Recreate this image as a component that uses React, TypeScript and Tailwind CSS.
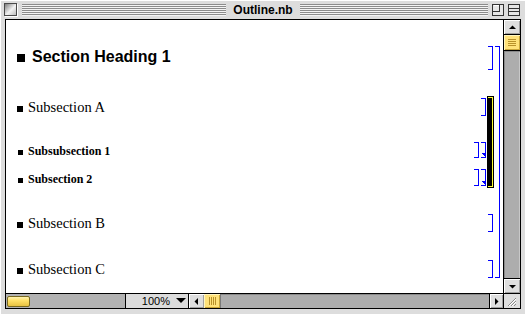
import React from 'react';

const sans = { fontFamily: '"Liberation Sans", Arial, sans-serif' };
const serif = { fontFamily: '"Liberation Serif", "Times New Roman", serif' };

// "]" shaped cell bracket, drawn with 1px rects so the edges stay crisp
function Bracket({ x, y, w, h, color = '#0000ff' }: { x: number; y: number; w: number; h: number; color?: string }) {
  return (
    <g fill={color}>
      <rect x={x} y={y} width={w} height={1} />
      <rect x={x + w - 1} y={y} width={1} height={h} />
      <rect x={x} y={y + h - 1} width={w} height={1} />
    </g>
  );
}

function ClosedGroup({ x, y, h }: { x: number; y: number; h: number }) {
  return (
    <g>
      <Bracket x={x} y={y} w={5} h={h} />
      <polygon points={`${x + 0.5},${y + h - 5} ${x + 5},${y + h - 5} ${x + 5},${y + h}`} fill="#0000ff" />
    </g>
  );
}

function Stripes({ w }: { w: number }) {
  return (
    <div
      style={{ width: w }}
      className="h-[12px] bg-[repeating-linear-gradient(to_bottom,#8c8c8c_0px,#8c8c8c_1px,#f4f4f4_1px,#f4f4f4_2px)]"
    />
  );
}

function TitleBar() {
  return (
    <div className="flex h-[19px] items-center pl-[4px]">
      <div className="h-[13px] w-[13px] border border-[#4a4a4a] bg-[linear-gradient(135deg,#7d7d7d,#f2f2f2_55%,#bdbdbd)] shadow-[1px_1px_0_#fff]" />
      <div className="ml-[5px]">
        <Stripes w={204} />
      </div>
      <div className="w-[74px] text-center text-[12px] font-bold leading-none text-black" style={sans}>
        Outline.nb
      </div>
      <Stripes w={188} />
      <svg width="12" height="12" className="ml-[4px]" shapeRendering="crispEdges">
        <rect x="0.5" y="0.5" width="11" height="11" fill="#e6e6e6" stroke="#333" />
        <path d="M7.5 1 V7.5 H1" fill="none" stroke="#333" />
        <path d="M1.5 1.5 H7" stroke="#fff" />
      </svg>
      <svg width="12" height="12" className="ml-[4px]" shapeRendering="crispEdges">
        <rect x="0.5" y="0.5" width="11" height="11" fill="#e6e6e6" stroke="#333" />
        <path d="M1 4.5 H11 M1 7.5 H11" stroke="#333" />
      </svg>
    </div>
  );
}

function Square({ size, gap }: { size: number; gap: number }) {
  return <span className="inline-block bg-black" style={{ width: size, height: size, marginRight: gap }} />;
}

function Cells() {
  return (
    <div className="flex flex-1 flex-col text-black">
      <div className="mt-[28px] pl-[11px] text-[16px] font-bold leading-[17px]" style={sans}>
        <Square size={8} gap={7} />
        Section Heading 1
      </div>
      <div className="mt-[35px] pl-[11px] text-[14.5px] leading-[15px]" style={serif}>
        <Square size={6} gap={5} />
        Subsection A
      </div>
      <div className="mt-[30px] pl-[12px] text-[12px] font-bold leading-[12px]" style={serif}>
        <Square size={5} gap={5} />
        Subsubsection 1
      </div>
      <div className="mt-[16px] pl-[12px] text-[12px] font-bold leading-[12px]" style={serif}>
        <Square size={5} gap={5} />
        Subsection 2
      </div>
      <div className="mt-[31px] pl-[11px] text-[14.5px] leading-[15px]" style={serif}>
        <Square size={6} gap={5} />
        Subsection B
      </div>
      <div className="mt-[31px] pl-[11px] text-[14.5px] leading-[15px]" style={serif}>
        <Square size={6} gap={5} />
        Subsection C
      </div>
    </div>
  );
}

function Brackets() {
  return (
    <svg width="33" height="273" className="shrink-0" shapeRendering="crispEdges">
      <Bracket x={18} y={26} w={5} h={24} />
      <Bracket x={25} y={26} w={5} h={232} />
      <Bracket x={11} y={78} w={5} h={18} />
      <rect x={17} y={76} width={7} height={92} fill="#000" />
      <Bracket x={18} y={77} w={5} h={90} color="#ffff33" />
      <Bracket x={4} y={122} w={5} h={16} />
      <ClosedGroup x={11} y={122} h={16} />
      <Bracket x={4} y={149} w={5} h={17} />
      <ClosedGroup x={11} y={149} h={17} />
      <Bracket x={18} y={194} w={5} h={18} />
      <Bracket x={18} y={240} w={5} h={18} />
    </svg>
  );
}

function ArrowButton({ dir }: { dir: 'up' | 'down' | 'left' | 'right' }) {
  const pts = {
    up: '3,8 10,8 6.5,4.5',
    down: '3,5 10,5 6.5,8.5',
    left: '8,3 8,10 4.5,6.5',
    right: '5,3 5,10 8.5,6.5',
  }[dir];
  return (
    <svg width="13" height="13" viewBox="0 0 13 13">
      <polygon points={pts} fill="#000" />
    </svg>
  );
}

function VScroll() {
  return (
    <div className="flex h-[273px] w-[16px] flex-col">
      <div className="flex h-[15px] items-center justify-center border-b border-black bg-[#dedede] shadow-[inset_1px_1px_0_#fff,inset_-1px_-1px_0_#a0a0a0]">
        <ArrowButton dir="up" />
      </div>
      <div className="flex h-[16px] flex-col items-center justify-center gap-[1px] border-b border-black bg-[#ffe27a] shadow-[inset_1px_1px_0_#fff6c0,inset_-1px_-1px_0_#c9a53a]">
        {[0, 1, 2, 3].map((i) => (
          <div key={i} className="h-[1px] w-[8px] bg-[#b8912a]" />
        ))}
      </div>
      <div className="flex-1 bg-[#adadad] shadow-[inset_1px_1px_0_#8a8a8a,inset_-1px_0_0_#c8c8c8]" />
      <div className="flex h-[15px] items-center justify-center border-t border-black bg-[#dedede] shadow-[inset_1px_1px_0_#fff,inset_-1px_-1px_0_#a0a0a0]">
        <ArrowButton dir="down" />
      </div>
    </div>
  );
}

function HScroll() {
  return (
    <div className="flex h-[15px] border-t border-black">
      <div className="flex w-[120px] items-center border-r border-black bg-[#b2b2b2] pl-[1px]">
        <div className="h-[11px] w-[23px] rounded-[2px] border border-[#7a6a20] bg-[linear-gradient(to_bottom,#fff3b0,#ffe066_40%,#e8c240)]" />
      </div>
      <div className="flex w-[62px] items-center justify-end bg-[#dcdcdc] pr-[1px] text-[11px] leading-none text-black" style={sans}>
        <span className="mr-[6px]">100%</span>
        <svg width="10" height="6" className="mr-[1px]">
          <polygon points="0,0 10,0 5,5" fill="#000" />
        </svg>
      </div>
      <div className="flex w-[16px] items-center justify-center border-l border-black bg-[#dedede] shadow-[inset_1px_1px_0_#fff,inset_-1px_-1px_0_#a0a0a0]">
        <ArrowButton dir="left" />
      </div>
      <div className="flex w-[16px] items-center justify-center gap-[1px] bg-[#ffe27a] shadow-[inset_1px_1px_0_#fff6c0,inset_-1px_-1px_0_#c9a53a]">
        {[0, 1, 2, 3].map((i) => (
          <div key={i} className="h-[8px] w-[1px] bg-[#b8912a]" />
        ))}
      </div>
      <div className="flex-1 border-l border-[#7a7a7a] bg-[#adadad] shadow-[inset_0_1px_0_#8a8a8a]" />
      <div className="flex w-[14px] items-center justify-center border-l border-black bg-[#dedede] shadow-[inset_1px_1px_0_#fff,inset_-1px_-1px_0_#a0a0a0]">
        <ArrowButton dir="right" />
      </div>
    </div>
  );
}

function GrowBox() {
  return (
    <div className="h-[15px] border-t border-black bg-[#dedede]">
      <svg width="16" height="14" shapeRendering="crispEdges">
        <path d="M4 12 L12 4 M7 12 L12 7 M10 12 L12 10" stroke="#8a8a8a" />
        <path d="M5 12 L12 5 M8 12 L12 8" stroke="#fff" />
      </svg>
    </div>
  );
}

export default function App() {
  return (
    <div className="h-[314px] w-[525px] overflow-hidden bg-[#dddddd] shadow-[inset_1px_1px_0_#fff]">
      <TitleBar />
      <div className="ml-[5px] flex h-[290px] w-[516px] border border-black">
        <div className="flex w-[497px] flex-col">
          <div className="flex h-[273px] bg-white">
            <Cells />
            <Brackets />
          </div>
          <HScroll />
        </div>
        <div className="flex flex-col border-l border-black">
          <VScroll />
          <GrowBox />
        </div>
      </div>
    </div>
  );
}
